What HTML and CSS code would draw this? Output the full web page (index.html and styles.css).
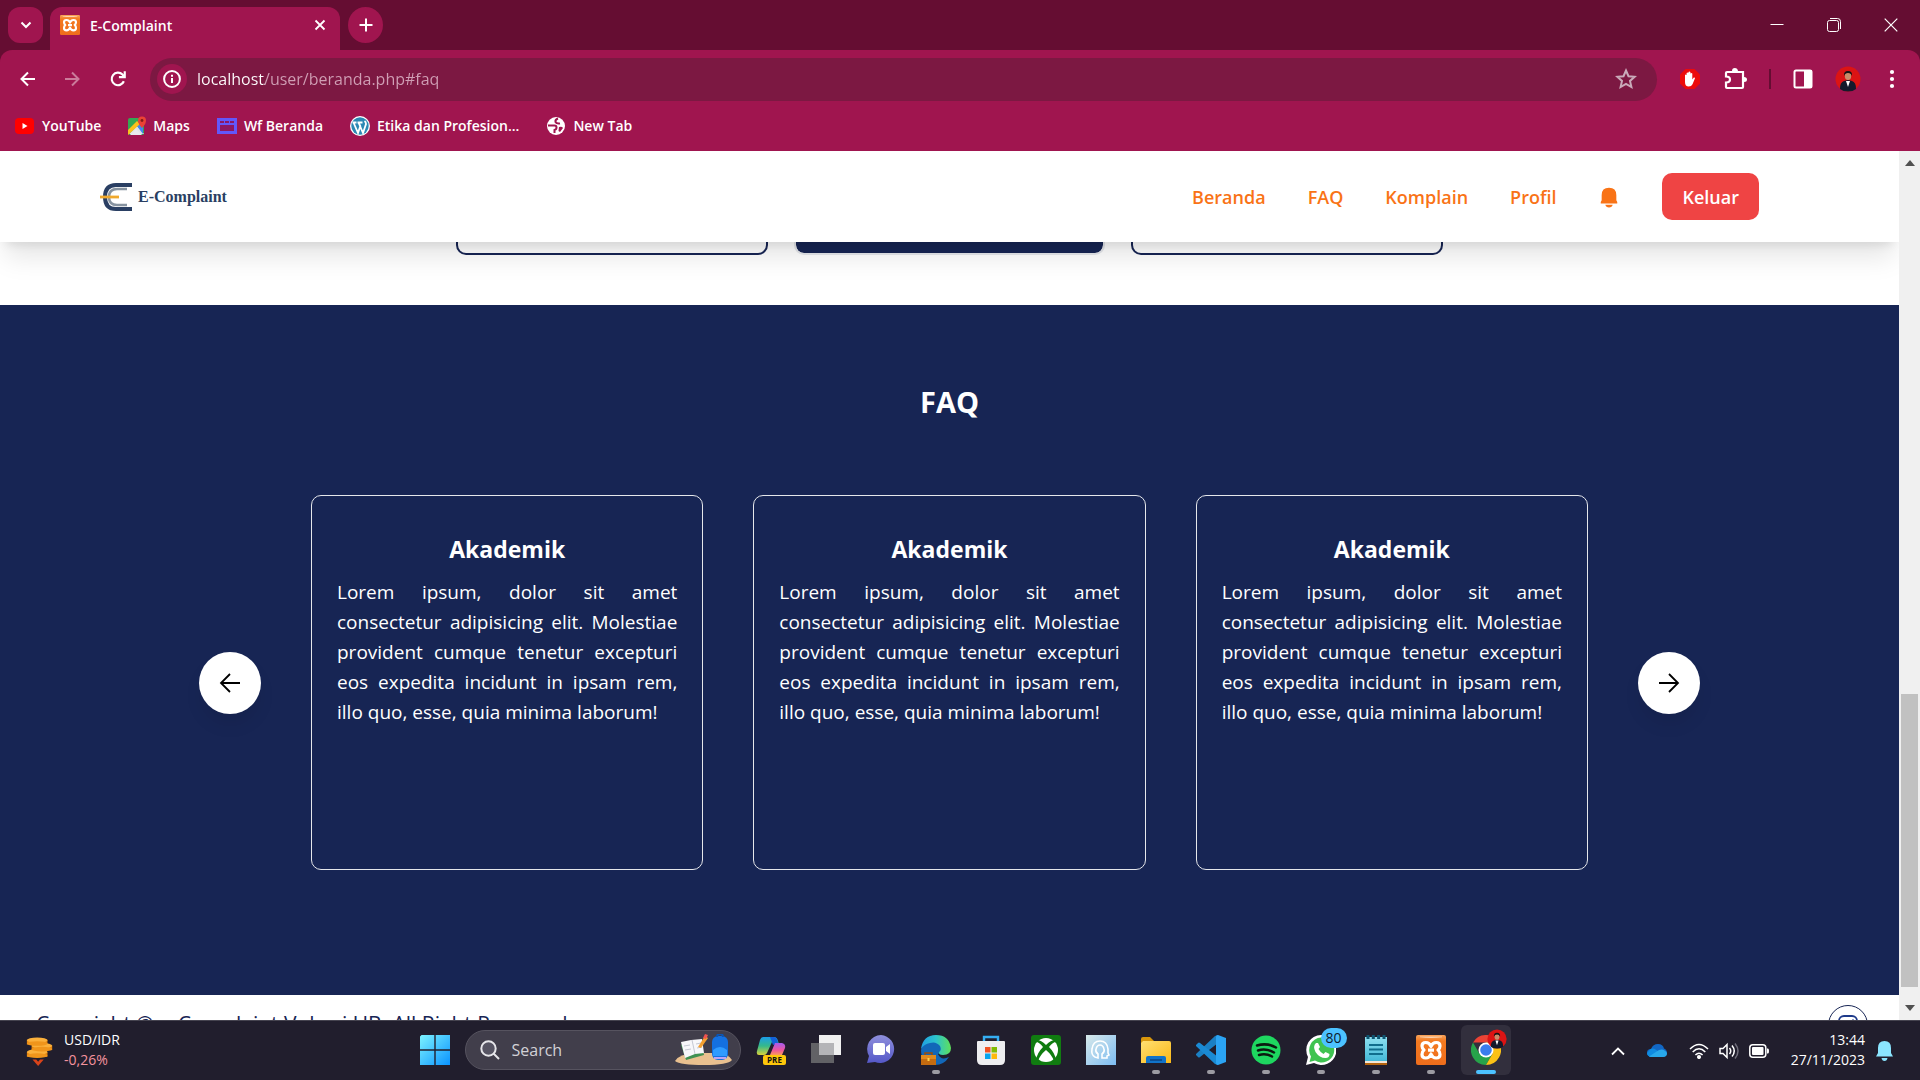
FILE: index.html
```html
<!DOCTYPE html>
<html lang="id">
<head>
<meta charset="utf-8">
<title>E-Complaint</title>
<link rel="stylesheet" href="styles.css">
</head>
<body>
<svg class="defs" aria-hidden="true">
  <defs>
    <linearGradient id="xamppFill" x1="0" y1="0" x2="0" y2="1"><stop offset="0" stop-color="#f8a45c"/><stop offset=".2" stop-color="#f47a20"/><stop offset="1" stop-color="#ee6d1c"/></linearGradient>
    <linearGradient id="winFill" x1="0" y1="0" x2="1" y2="1"><stop offset="0" stop-color="#7df3ff"/><stop offset="1" stop-color="#0a93ff"/></linearGradient>
    <linearGradient id="edgeTop" x1="0" y1="0" x2="1" y2="0"><stop offset="0" stop-color="#1f9fe4"/><stop offset=".5" stop-color="#2cc3cc"/><stop offset="1" stop-color="#5fe05a"/></linearGradient>
    <linearGradient id="folderFill" x1="0" y1="0" x2="1" y2="1"><stop offset="0" stop-color="#ffdf72"/><stop offset="1" stop-color="#fbb917"/></linearGradient>
    <linearGradient id="chatFill" x1="0" y1="0" x2="0" y2="1"><stop offset="0" stop-color="#8f8fdc"/><stop offset="1" stop-color="#5558c8"/></linearGradient>
    <linearGradient id="pilotA" x1="0" y1="0" x2="0" y2="1"><stop offset="0" stop-color="#1b9de8"/><stop offset=".5" stop-color="#35b98a"/><stop offset="1" stop-color="#d9d23a"/></linearGradient>
    <linearGradient id="pilotB" x1="0" y1="0" x2="0" y2="1"><stop offset="0" stop-color="#a45bf0"/><stop offset=".6" stop-color="#f0569b"/><stop offset="1" stop-color="#fb9a5c"/></linearGradient>
    <linearGradient id="soundFill" x1="0" y1="0" x2="1" y2="1"><stop offset="0" stop-color="#d8e9ea"/><stop offset="1" stop-color="#7cbcf2"/></linearGradient>
    <linearGradient id="noteFill" x1="0" y1="0" x2="0" y2="1"><stop offset="0" stop-color="#8ee0f0"/><stop offset="1" stop-color="#44b9d8"/></linearGradient>
    <symbol id="xampp" viewBox="0 0 30 30">
      <rect width="30" height="30" rx="2" fill="url(#xamppFill)"/>
      <path d="M4 1.500h22v.8q-11 1.600-22 0z" fill="#fbd3b0"/>
      <path d="M15 11.500Q13.500 7.500 9.800 7.500 6 7.500 6 11q0 2.500 2 4-2 1.500-2 4.500 0 3.500 3.800 3.500 3.700 0 5.200-4 1.500 4 5.200 4 3.800 0 3.800-3.500 0-3-2-4.500 2-1.500 2-4 0-3.500-3.800-3.500-3.700 0-5.200 4zM12 15.200h6" fill="none" stroke="#fff" stroke-width="3.200" stroke-linejoin="round"/>
    </symbol>
    <symbol id="portrait" viewBox="0 0 26 26">
      <circle cx="13" cy="13" r="12.500" fill="#dc1414"/>
      <path d="M5 23q0-7 4-8l4-1 4 1q4 1 4 8-3 2.500-8 2.500T5 23z" fill="#141a2c"/>
      <path d="M11 15h4l-2 6z" fill="#fff"/>
      <ellipse cx="13" cy="10" rx="3.200" ry="4" fill="#c98d6a"/>
      <path d="M9 10q-.5-5 4-5t4 5q-1-3-4-3t-4 3z" fill="#141414"/>
    </symbol>
  </defs>
</svg>

<header class="browser">
  <div class="tabstrip">
    <button class="tab-search" aria-label="Search tabs"><svg width="12" height="12" viewBox="0 0 12 12"><path d="M1.500 3.500 6 8l4.500-4.500" fill="none" stroke="#fff" stroke-width="2"/></svg></button>
    <div class="tab">
      <svg width="20" height="20"><use href="#xampp"/></svg>
      <span class="tab-title">E-Complaint</span>
      <button class="tab-close" aria-label="Close tab"><svg width="12" height="12" viewBox="0 0 12 12"><path d="m1.500 1.500 9 9m0-9-9 9" stroke="#fff" stroke-width="1.800"/></svg></button>
    </div>
    <button class="tab-new" aria-label="New tab"><svg width="14" height="14" viewBox="0 0 14 14"><path d="M7 .5v13M.5 7h13" stroke="#fff" stroke-width="2"/></svg></button>
    <div class="window-buttons">
      <button aria-label="Minimize"><svg width="14" height="14" viewBox="0 0 14 14"><path d="M.5 6.500h13" stroke="#fff"/></svg></button>
      <button aria-label="Restore"><svg width="14" height="14" viewBox="0 0 14 14" fill="none" stroke="#fff"><rect x=".5" y="2.500" width="11" height="11" rx="2"/><path d="M3 .5h7.500q3 0 3 3V11"/></svg></button>
      <button aria-label="Close"><svg width="14" height="14" viewBox="0 0 14 14"><path d="m.7.7 12.600 12.600m0-12.600L.7 13.300" stroke="#fff" stroke-width="1.200"/></svg></button>
    </div>
  </div>

  <div class="toolbar">
    <div class="history">
      <button aria-label="Back"><svg width="18" height="18" viewBox="0 0 18 18" fill="none" stroke="#fff" stroke-width="2"><path d="M16 9H2.500M9 2.500 2.500 9l6.500 6.500"/></svg></button>
      <button aria-label="Forward"><svg width="18" height="18" viewBox="0 0 18 18" fill="none" stroke="#cb7b9b" stroke-width="2"><path d="M1 9h13.500M8 2.500l6.500 6.500-6.500 6.500"/></svg></button>
      <button aria-label="Reload"><svg width="18" height="18" viewBox="0 0 20 20" fill="none" stroke="#fff" stroke-width="2.400"><path d="M16.500 12.500A7 7 0 1 1 15 5l2 2.500"/><path d="M17.500 1.500v6.500H11" /></svg></button>
    </div>
    <div class="omnibox">
      <button class="site-info" aria-label="Site information"><svg width="18" height="18" viewBox="0 0 18 18"><circle cx="9" cy="9" r="7.900" fill="none" stroke="#fff" stroke-width="2"/><path d="M9 8v5M9 4.800v2" stroke="#fff" stroke-width="2"/></svg></button>
      <input class="url" type="text" aria-label="Address" value="localhost/user/beranda.php#faq">
      <button aria-label="Bookmark"><svg width="22" height="22" viewBox="0 0 22 22"><path d="m11 2.500 2.500 5.700 6.200.6-4.700 4.100 1.400 6.100L11 15.800 5.600 19 7 12.900 2.300 8.800l6.200-.6z" fill="none" stroke="#c9aab9" stroke-width="2"/></svg></button>
    </div>
    <div class="extensions">
      <button aria-label="Ad blocker"><svg width="22" height="22" viewBox="0 0 22 22"><path d="M6.500 1h9L21 6.500v9L15.500 21h-9L1 15.500v-9z" fill="#ec0b0b"/><path d="M6 11.500V7q.8-1 1.600 0v-2q.9-1.200 1.800 0V4q1-1.200 2 0v1.500q1-1.200 1.900 0v6l1.500-2q1.300-.3 1.200.8l-2.500 6q-1 2.200-3.800 2.200Q6 18.500 6 14z" fill="#fff"/></svg></button>
      <button aria-label="Extensions"><svg width="24" height="24" viewBox="0 0 24 24"><path d="M4 5h16q0 0 0 5.500v9.500q0 1-1 1H4q-1 0-1-1v-4.500q4 0 4-3T3 9.500V6q0-1 1-1z" fill="none" stroke="#fff" stroke-width="2.200"/><path d="M9 4q0-3 2.800-3T15 4zM21 10q3 0 3 2.500T21 15z" fill="#fff"/></svg></button>
      <span class="divider"></span>
      <button aria-label="Side panel"><svg width="20" height="20" viewBox="0 0 20 20"><rect x="1.500" y="1.500" width="17" height="17" rx="1.500" fill="none" stroke="#fff" stroke-width="2"/><path d="M11 1h8v18h-8z" fill="#fff"/></svg></button>
      <button aria-label="Profile"><svg width="26" height="26"><use href="#portrait"/></svg></button>
      <button class="menu" aria-label="Menu"><svg width="6" height="20" viewBox="0 0 6 20" fill="#fff"><circle cx="3" cy="3" r="2.100"/><circle cx="3" cy="10" r="2.100"/><circle cx="3" cy="17" r="2.100"/></svg></button>
    </div>
  </div>

  <nav class="bookmarks" aria-label="Bookmarks">
    <a href="#"><svg width="20" height="20" viewBox="0 0 20 20"><rect y="2" width="19" height="16" rx="4" fill="#f00"/><path d="m7.500 7 5 3-5 3z" fill="#fff"/></svg>YouTube</a>
    <a href="#"><svg width="18" height="20" viewBox="0 0 18 20"><rect y="2" width="16" height="17" rx="2" fill="#34a853"/><path d="m1 18 8-8 7 8z" fill="#dfe4e8"/><path d="M9 10l6-5v13z" fill="#4285f4"/><path d="m0 14 9-9 3 3-12 11z" fill="#fbc11b"/><path d="M2 19h12l-6-6z" fill="#e8eaed"/><path d="M14 12q-4-4-4-7.500a4 4 0 0 1 8 0Q18 8 14 12z" fill="#ea4335"/><circle cx="14" cy="4.500" r="1.400" fill="#811e16"/></svg>Maps</a>
    <a href="#"><svg width="20" height="20" viewBox="0 0 20 20"><path d="M0 2h20v16H0z" fill="#6257fa"/><path d="M3 5h4v2H3zm5 0h4v2H8zm5 0h4v2h-4zM3 9h14v6H3z" fill="#8d1762"/></svg>Wf Beranda</a>
    <a href="#"><svg width="20" height="20" viewBox="0 0 20 20"><circle cx="10" cy="10" r="10" fill="#fff"/><circle cx="10" cy="10" r="8.700" fill="#2b88b4"/><path d="M3.500 6.500 8 17l2.300-7L8.500 6.500M8.500 6.500 13 17l3-9q0-2-1.500-3M2.500 6.500h4M7.500 6.500h5" fill="none" stroke="#fff" stroke-width="1.800"/></svg>Etika dan Profesion...</a>
    <a href="#"><svg width="20" height="20" viewBox="0 0 20 20"><circle cx="10" cy="10" r="9" fill="#fff"/><path d="M2 9.500h6.500q2 0 2 2t-2 2.500v3M12 2.500q-3 1-2.500 3.500 1 2 4.500 1.500" fill="none" stroke="#a0154f" stroke-width="2"/><path d="M13 11q3-1 4 1l-3 4-1.500-1z" fill="#a0154f"/></svg>New Tab</a>
  </nav>
</header>

<div class="viewport">
  <div class="page">
    <header class="site-header">
      <a class="brand" href="#">
        <svg width="32" height="28" viewBox="0 0 32 28"><path d="M32 2H16Q5 2 5 14t11 12h16" fill="none" stroke="#2a3f63" stroke-width="4"/><path d="M27 6h-10q-8 0-8 8t8 8h10" fill="none" stroke="#8793a0" stroke-width="2.600"/><path d="M0 14h19" stroke="#f0a92e" stroke-width="2.800"/></svg>
        <span>E-Complaint</span>
      </a>
      <nav class="site-nav" aria-label="Menu utama">
        <a href="#">Beranda</a>
        <a href="#faq">FAQ</a>
        <a href="#">Komplain</a>
        <a href="#">Profil</a>
        <a class="bell" href="#" aria-label="Notifikasi"><svg width="22" height="24" viewBox="0 0 24 24" fill="#f97316"><path d="M3 19v-1.500l1-2V10q0-8 8-8t8 8v5.500l1 2V19z"/><path d="M8 20.500h8q-.7 3-4 3t-4-3z"/></svg></a>
        <button class="logout">Keluar</button>
      </nav>
    </header>

    <section class="services" aria-label="Layanan">
      <article class="service"></article>
      <article class="service service-active"></article>
      <article class="service"></article>
    </section>

    <section class="faq" id="faq">
      <h2>FAQ</h2>
      <div class="carousel">
        <button class="arrow" aria-label="Sebelumnya"><svg width="24" height="24" viewBox="0 0 24 24" fill="none" stroke="#000" stroke-width="1.800"><path d="M22 12H3M12 3l-9 9 9 9"/></svg></button>
        <article class="card"><h3>Akademik</h3><p>Lorem ipsum, dolor sit amet consectetur adipisicing elit. Molestiae provident cumque tenetur excepturi eos expedita incidunt in ipsam rem, illo quo, esse, quia minima laborum!</p></article>
        <article class="card"><h3>Akademik</h3><p>Lorem ipsum, dolor sit amet consectetur adipisicing elit. Molestiae provident cumque tenetur excepturi eos expedita incidunt in ipsam rem, illo quo, esse, quia minima laborum!</p></article>
        <article class="card"><h3>Akademik</h3><p>Lorem ipsum, dolor sit amet consectetur adipisicing elit. Molestiae provident cumque tenetur excepturi eos expedita incidunt in ipsam rem, illo quo, esse, quia minima laborum!</p></article>
        <button class="arrow" aria-label="Berikutnya"><svg width="24" height="24" viewBox="0 0 24 24" fill="none" stroke="#000" stroke-width="1.800"><path d="M2 12h19M12 3l9 9-9 9"/></svg></button>
      </div>
    </section>

    <footer class="site-footer">
      <p>Copyright © e-Complaint Vokasi UB, All Right Reserved</p>
      <a class="social" href="#" aria-label="Instagram"><svg width="20" height="20" viewBox="0 0 20 20" fill="none" stroke="#1e3a8a" stroke-width="1.800"><rect x="1" y="1" width="18" height="18" rx="5"/><circle cx="10" cy="10" r="4"/><path d="M14.500 5h1"/></svg></a>
    </footer>
  </div>
  <div class="scrollbar" aria-hidden="true">
    <svg width="10" height="6" viewBox="0 0 10 6"><path d="M0 6 5 0l5 6z" fill="#505050"/></svg>
    <div class="track"><div class="thumb"></div></div>
    <svg width="10" height="6" viewBox="0 0 10 6"><path d="m0 0 5 6 5-6z" fill="#505050"/></svg>
  </div>
</div>

<footer class="taskbar">
  <button class="widget">
    <svg width="30" height="30" viewBox="0 0 30 32"><g fill="#e2820c"><path d="M1 4h22v5H1zM6 10h22v5H6zM1 17h22v5H1z"/></g><g fill="#fbb03b"><ellipse cx="12" cy="4.500" rx="11" ry="3"/><ellipse cx="17" cy="10.500" rx="11" ry="3"/><ellipse cx="12" cy="17" rx="11" ry="3"/></g><g fill="#f0951b"><ellipse cx="12" cy="8" rx="11" ry="2.500"/><ellipse cx="17" cy="14" rx="11" ry="2.500"/><ellipse cx="12" cy="21" rx="11" ry="2.500"/></g><path d="M7 25h4l2 2.500 2-2.500h4l-6 7z" fill="#d8431a"/></svg>
    <span class="widget-text"><span>USD/IDR</span><span class="down">-0,26%</span></span>
  </button>

  <div class="apps">
    <button class="app" aria-label="Start"><svg width="30" height="30" viewBox="0 0 30 30" fill="url(#winFill)"><path d="M1.500 0H14.300V14.300H0V1.500zM15.700 0H30V14.300H15.700zM0 15.700H14.300V30H0zM15.700 15.700H30V30H15.700z"/></svg></button>
    <label class="search">
      <svg width="20" height="20" viewBox="0 0 20 20" fill="#565463" stroke="#e6e6ea" stroke-width="2"><circle cx="8.500" cy="8.500" r="7.200"/><path d="m13.500 13.500 5.500 5.500"/></svg>
      <input type="search" placeholder="Search" aria-label="Search">
      <svg width="58" height="32" viewBox="0 0 58 32"><path d="M0 27q4-7 20-8h22q12 1 15 7-4 5-28 5T0 27z" fill="#e9c08f"/><path d="m6 11 20-4 3 14-18 5z" fill="#3f9152"/><path d="m6 8 10-2 11-1 2 14-9 1-10 4z" fill="#f7f7fa"/><path d="m17 6 3 14M9 12l6-1m-5 5 6-1m5-5 5-1m-4 5 5-1" stroke="#c5c8d2"/><path d="m23 13 7-11 3 2-7 10z" fill="#f5a02f"/><path d="m28 4 2-4 3 1-2 4z" fill="#ef5350"/><rect x="37" y="2" width="16" height="24" rx="6" fill="#1470e0"/><path d="M42 3q0-3 3-3t3 3" fill="none" stroke="#0b55b5" stroke-width="2"/><path d="M38 16q7-6 14 0v6H38z" fill="#2e9bff"/><path d="M39 23h12v2H39z" fill="#b9a4f5"/></svg>
    </label>
    <button class="app" aria-label="Copilot"><svg width="30" height="30" viewBox="0 0 30 30"><path d="M7 2h11q3 0 4 4l1 3h-5l-2-2-5 11q-1 2-3 2H3q-3 0-2-4L4 5q1-3 3-3z" fill="url(#pilotA)"/><path d="M18 2q3 0 4 6l-5 2-3-8z" fill="#1360d8"/><path d="M19 8h7q4 1 3 5l-3 7H14z" fill="url(#pilotB)"/><rect x="7" y="20" width="23" height="10" rx="2" fill="#fec70b"/><text x="18.500" y="28" class="pre">PRE</text></svg></button>
    <button class="app" aria-label="Task view"><svg width="30" height="30" viewBox="0 0 30 30"><path d="M0 8h23v20H0z" fill="#626266"/><path d="M8 0h22v20H8z" fill="#f0f0f0"/><path d="M8 8h15v12H8z" fill="#b4b4b7"/></svg></button>
    <button class="app" aria-label="Chat"><svg width="30" height="30" viewBox="0 0 30 30"><path d="M15 0a14 14 0 1 1-6 27l-8 1 2-7A14 14 0 0 1 15 0z" fill="url(#chatFill)"/><rect x="7" y="8" width="12" height="12" rx="2" fill="#fff"/><path d="m20 12 4-3v10l-4-3z" fill="#fff"/></svg></button>
    <button class="app running" aria-label="Edge"><svg width="30" height="30" viewBox="0 0 30 30"><path d="M0 15Q2 3 14 4q10 1 10 11l-7 4q3 7 11 3-5 8-14 8Q0 29 0 15z" fill="#1267b8"/><path d="M0 14Q2 0 15 0t15 13q0 7-8 7-5 0-4-3 3-2 1-6-4-5-10-3-6 1-9 6z" fill="url(#edgeTop)"/><path d="M0 20h15v10H0z" fill="#c46b10"/><path d="M0 20h15v4H0z" fill="#e08a1e"/><path d="M4 20v-2h7v2" fill="none" stroke="#9a4e0b" stroke-width="1.500"/><path d="M6.500 23h2v3h-2z" fill="#ffd24a"/></svg></button>
    <button class="app" aria-label="Store"><svg width="30" height="30" viewBox="0 0 30 30"><path d="M8 7V2h14v5" fill="none" stroke="#35aef2" stroke-width="2.400"/><path d="M2 6h26q1 0 1 1v18q0 5-5 5H6q-5 0-5-5V7q0-1 1-1z" fill="#eeeef0"/><path d="M9 12h5.500v5.500H9z" fill="#f05223"/><path d="M15.500 12H21v5.500h-5.500z" fill="#80bb03"/><path d="M9 18.500h5.500V24H9z" fill="#05a5ef"/><path d="M15.500 18.500H21V24h-5.500z" fill="#feb80a"/></svg></button>
    <button class="app" aria-label="Xbox"><svg width="30" height="30" viewBox="0 0 30 30"><rect width="30" height="30" rx="3" fill="#107c10"/><circle cx="15" cy="15" r="12" fill="#fff"/><path d="M6 5q4 0 9 5 5-5 9-5l1 2q-3 0-7 5 6 6 7 13l-2 1q-2-6-8-11-6 5-8 11l-2-1q1-7 7-13-4-5-7-5z" fill="#107c10"/></svg></button>
    <button class="app" aria-label="Audio control"><svg width="30" height="30" viewBox="0 0 30 30"><path d="M0 0h30v30H0z" fill="url(#soundFill)"/><path d="M9 22q-4-2-3-8 1-8 8-8t8 8v4l1 2-2 1v2h-5v-4q3-2 2-5-1-4-4-4t-4 4q-1 3 2 5v4z" fill="none" stroke="#fff" stroke-width="1.600"/></svg></button>
    <button class="app running" aria-label="File Explorer"><svg width="30" height="30" viewBox="0 0 30 30"><path d="M0 4q0-2 2-2h7l4 4v5H0z" fill="#d8960b"/><path d="M2 6h26q2 0 2 2v20H0V8z" fill="url(#folderFill)"/><path d="M5 28v-5q0-2 2-2h16q2 0 2 2v5z" fill="#1173c9"/><path d="M9 24h12v2H9z" fill="#0b4f94"/></svg></button>
    <button class="app running" aria-label="Visual Studio Code"><svg width="30" height="30" viewBox="0 0 30 30"><path d="M22 0v8L4 22q-1 1-2 0l-2-2v-1L19 1z" fill="#1b80c4"/><path d="M22 30v-8L4 8Q3 7 2 8l-2 2v1l19 18z" fill="#1a8ad4"/><path d="m22 0 8 3v24l-8 3q-2 0-2-2V2q0-2 2-2z" fill="#2ba4f4"/></svg></button>
    <button class="app running" aria-label="Spotify"><svg width="30" height="30" viewBox="0 0 30 30"><circle cx="15" cy="15" r="14.500" fill="#1ed760"/><path d="M6 10.500q10-3 19 2M7 15.500q8-2.500 16 2M8 20q7-2 13 1.500" fill="none" stroke="#0b1a10" stroke-width="2.500" stroke-linecap="round"/></svg></button>
    <button class="app running" aria-label="WhatsApp"><svg width="30" height="30" viewBox="0 0 30 30"><path d="M15 0a15 15 0 1 1-7 28l-8 2 2-8A15 15 0 0 1 15 0z" fill="#fff"/><path d="M15 2.500a12.500 12.500 0 1 1-6 23l-5.500 1.500L5 21.500A12.500 12.500 0 0 1 15 2.500z" fill="#3fc351"/><path d="M10 8h2l2 4-1.500 2q2 3.500 5 5l2-2 4 2q0 4-4 4-6 0-10-6-3-6 .5-9z" fill="#fff"/></svg><span class="badge">80</span></button>
    <button class="app running" aria-label="Notepad"><svg width="22" height="30" viewBox="0 0 22 30"><path d="M0 27h22v3H0z" fill="#b4640f"/><path d="M0 25h22v3H0z" fill="#f3e6d6"/><path d="M0 2h22v24H0z" fill="url(#noteFill)"/><path d="M4 10h14M4 14.500h14M4 19h14" stroke="#106e8d" stroke-width="2"/><path d="M3 0v4M8.300 0v4M13.600 0v4M19 0v4" stroke="#0f5571" stroke-width="3"/></svg></button>
    <button class="app running" aria-label="XAMPP"><svg width="30" height="30"><use href="#xampp"/></svg></button>
    <button class="app running active" aria-label="Chrome"><svg width="30" height="30" viewBox="0 0 30 30"><path d="M2 7.500a15 15 0 0 1 26 0H15z" fill="#ea4335"/><path d="M2 7.500A15 15 0 0 0 15 30l6.500-11.300-13 0z" fill="#27a34a"/><path d="M28 7.500A15 15 0 0 1 15 30l6.500-11.300L15 7.500z" fill="#fbc116"/><circle cx="15" cy="15" r="7.500" fill="#fff"/><circle cx="15" cy="15" r="5.800" fill="#3b7ded"/></svg><svg class="mini" width="20" height="20"><use href="#portrait"/></svg></button>
  </div>

  <div class="tray">
    <button aria-label="Show hidden icons"><svg width="14" height="10" viewBox="0 0 14 10"><path d="m1 8.500 6-6 6 6" fill="none" stroke="#fff" stroke-width="1.800"/></svg></button>
    <button aria-label="OneDrive"><svg width="20" height="14" viewBox="0 0 20 14"><path d="M4 5q2-5 7-5 5 0 6 4.500 3 1 3 4.500t-4 4H4q-4-1-4-4.500T4 5z" fill="#1267c4"/><path d="m0 9 3.500-4q3-1 5 .5L17 11l-1 2H4q-4-1-4-4z" fill="#0f8be0"/><path d="M2 12.500 12 6q5-2 8 3 0 4-4 4H4z" fill="#28a8ea"/></svg></button>
    <button class="status" aria-label="Network, sound and battery">
      <svg width="20" height="16" viewBox="0 0 20 16" fill="none" stroke="#fff" stroke-width="1.500"><path d="M1 6q9-9 18 0M3.700 9q6.300-6.400 12.600 0M6.400 12q3.600-3.600 7.200 0"/><circle cx="10" cy="14" r="1.300" fill="#fff"/></svg>
      <svg width="20" height="18" viewBox="0 0 20 18" fill="none" stroke="#fff" stroke-width="1.500"><path d="M1 6.500h3L8 2.500v13l-4-4H1z"/><path d="M10.500 6q2.500 3 0 6M13 3.500q4.500 5.500 0 11"/><path d="M16 1.500q6 7.500 0 15" stroke="#6f6d7a"/></svg>
      <svg width="20" height="14" viewBox="0 0 20 14"><rect x=".8" y=".8" width="16" height="12.400" rx="3" fill="none" stroke="#fff" stroke-width="1.500"/><rect x="3" y="3" width="11.500" height="8" rx="1" fill="#fff"/><path d="M18 4.500h1q1 0 1 2.500t-1 2.500h-1z" fill="#fff"/></svg>
    </button>
    <button class="clock"><span>13:44</span><span>27/11/2023</span></button>
    <button aria-label="Notifications"><svg width="17" height="20" viewBox="0 0 17 20" fill="#8be6ff"><path d="M0 15.500 2 12V7q0-7 6.500-7T15 7v5l2 3.500z"/><path d="M5.500 17h6q-.5 3-3 3t-3-3z"/></svg></button>
  </div>
</footer>
</body>
</html>
```
FILE: styles.css
```css
* { box-sizing: border-box; margin: 0; padding: 0; }

body {
  display: flex;
  flex-direction: column;
  height: 100vh;
  overflow: hidden;
  background: #fff;
  font-family: "Open Sans", "Noto Sans", sans-serif;
}

button, input { border: 0; background: none; font: inherit; color: inherit; }
input:focus { outline: 0; }
a { color: inherit; text-decoration: none; }
svg { display: block; flex: none; }
.defs { position: absolute; width: 0; height: 0; }

/* Browser chrome */
.browser { background: #650d32; color: #fff; font-size: 14px; }

.tabstrip { display: flex; height: 50px; padding: 7px 0 0 8px; }
.tab-search, .tab-new {
  display: grid;
  place-items: center;
  width: 35px;
  height: 36px;
  background: #a0154f;
  border-radius: 12px;
}
.tab-new { margin-left: 8px; border-radius: 50%; }
.tab {
  display: flex;
  align-items: center;
  gap: 10px;
  width: 290px;
  height: 43px;
  margin-left: 7px;
  padding: 0 14px 7px 10px;
  background: #a0154f;
  border-radius: 12px 12px 0 0;
}
.tab-title { flex: 1; font-weight: 600; }
.window-buttons { display: flex; gap: 43px; margin: 0 22px 7px auto; }

.toolbar {
  display: flex;
  align-items: center;
  height: 58px;
  padding: 0 25px 0 19px;
  background: #a0154f;
  border-radius: 12px 12px 0 0;
}
.history { display: flex; align-items: center; gap: 27px; width: 131px; }
.omnibox {
  display: flex;
  align-items: center;
  gap: 10px;
  flex: 1;
  height: 43px;
  padding: 0 20px 0 7px;
  background: #7c1842;
  border-radius: 22px;
}
.site-info {
  display: grid;
  place-items: center;
  width: 30px;
  height: 30px;
  background: #a0154f;
  border-radius: 50%;
}
.url {
  flex: 1;
  font-size: 16px;
  /* the host part is brighter than the path */
  background: linear-gradient(to right, #fff 68px, #d09fb5 68px);
  background-clip: text;
  -webkit-background-clip: text;
  -webkit-text-fill-color: transparent;
}
.extensions { display: flex; align-items: center; gap: 22px; margin-left: 22px; }
.menu { margin-left: 6px; }
.divider { width: 2px; height: 20px; background: #650d32; }

.bookmarks {
  display: flex;
  align-items: center;
  gap: 27px;
  height: 43px;
  padding: 0 15px 8px;
  background: #a0154f;
  font-weight: 600;
}
.bookmarks a { display: flex; align-items: center; gap: 7px; }

/* Page area */
.viewport { display: flex; flex: 1; min-height: 0; overflow: hidden; }
.page { flex: 1; min-width: 0; overflow: hidden; }

.site-header {
  position: relative;
  z-index: 1;
  display: flex;
  align-items: center;
  justify-content: space-between;
  height: 91px;
  padding: 0 140px 0 100px;
  background: #fff;
  box-shadow: 0 20px 25px -5px rgb(0 0 0 / 0.1), 0 8px 10px -6px rgb(0 0 0 / 0.1);
}
.brand {
  display: flex;
  align-items: center;
  gap: 6px;
  color: #2a3f63;
  font: bold 16px "Liberation Serif", serif;
}
.site-nav {
  display: flex;
  align-items: center;
  gap: 42px;
  color: #f97316;
  font-size: 18px;
  font-weight: 600;
}
.logout {
  height: 47px;
  padding: 0 20px;
  background: #ef4444;
  border-radius: 10px;
  color: #fff;
}

.services {
  display: grid;
  grid-template-columns: repeat(3, 1fr);
  gap: 26px;
  height: 63px;
  padding: 0 456px 50px;
}
.service { border: 2px solid #172554; border-top: 0; border-radius: 0 0 10px 10px; }
.service-active { background: #172554; background-clip: padding-box; border-color: #e5e7eb; }

.faq { padding: 75px 199px 125px; background: #172554; color: #fff; }
.faq h2 { margin-bottom: 72px; font-size: 29px; line-height: 43px; text-align: center; }
.carousel {
  display: grid;
  grid-template-columns: 62px repeat(3, 1fr) 62px;
  align-items: center;
  gap: 50px;
}
.card {
  min-height: 375px;
  padding: 36px 25px;
  border: 1px solid #e5e7eb;
  border-radius: 10px;
}
.card h3 { margin-bottom: 10px; font-size: 23px; line-height: 35px; text-align: center; }
.card p { font-size: 19px; line-height: 30px; text-align: justify; }
.arrow {
  display: grid;
  place-items: center;
  height: 62px;
  background: #fff;
  border-radius: 50%;
  box-shadow: 0 12px 19px -4px rgb(0 0 0 / 0.1);
}

.site-footer {
  display: flex;
  justify-content: space-between;
  padding: 10px 31px 10px 36px;
  color: #172554;
  font-size: 21px;
}
.site-footer p { line-height: 38px; }
.social {
  display: grid;
  place-items: center;
  width: 40px;
  height: 40px;
  border: 1px solid #172554;
  border-radius: 50%;
}

.scrollbar {
  display: flex;
  flex-direction: column;
  align-items: center;
  gap: 8px;
  width: 21px;
  padding: 9px 0;
  background: #f0f0f0;
}
.track { display: flex; flex-direction: column; justify-content: flex-end; flex: 1; width: 17px; padding-bottom: 10px; }
.thumb { height: 36%; background: #c1c1c1; }

/* Taskbar */
.taskbar {
  display: grid;
  grid-template-columns: 1fr auto 1fr;
  align-items: center;
  height: 60px;
  background: #211e2d;
  border-top: 1px solid #45434f;
  color: #fff;
  font-size: 14px;
}
.widget { display: flex; align-items: center; gap: 9px; padding-left: 25px; }
.widget-text, .clock { display: grid; padding-bottom: 2px; line-height: 20px; }
.widget-text { text-align: left; }
.down { color: #f4939e; }

.apps { display: flex; align-items: center; gap: 5px; padding-bottom: 1px; }
.app {
  position: relative;
  display: grid;
  place-items: center;
  width: 50px;
  height: 50px;
  border-radius: 6px;
}
.running::after {
  content: "";
  position: absolute;
  bottom: 1px;
  width: 8px;
  height: 4px;
  background: #9c9ba2;
  border-radius: 2px;
}
.active { background: #322f3d; }
.active::after { width: 20px; background: #4cc2ff; }
.mini { position: absolute; top: 4px; right: 4px; }
.badge {
  position: absolute;
  top: 3px;
  right: -1px;
  width: 26px;
  background: #4cc2ff;
  border-radius: 10px;
  color: #0b1a2c;
  line-height: 20px;
}
.pre { fill: #111; font: bold 8px "Open Sans", sans-serif; text-anchor: middle; }
.search {
  display: flex;
  align-items: center;
  gap: 12px;
  width: 276px;
  height: 40px;
  padding: 0 7px 0 14px;
  background: #413e4b;
  border: 1px solid #56535f;
  border-radius: 20px;
}
.search input { flex: 1; min-width: 0; font-size: 16px; }
.search input::placeholder { color: #d2d1d6; opacity: 1; }

.tray { display: flex; align-items: center; justify-content: flex-end; padding-right: 27px; }
.tray > button { margin-left: 22px; }
.status { display: flex; align-items: center; gap: 10px; }
.clock { text-align: right; }
.tray > .clock + button { margin-left: 11px; }
```
